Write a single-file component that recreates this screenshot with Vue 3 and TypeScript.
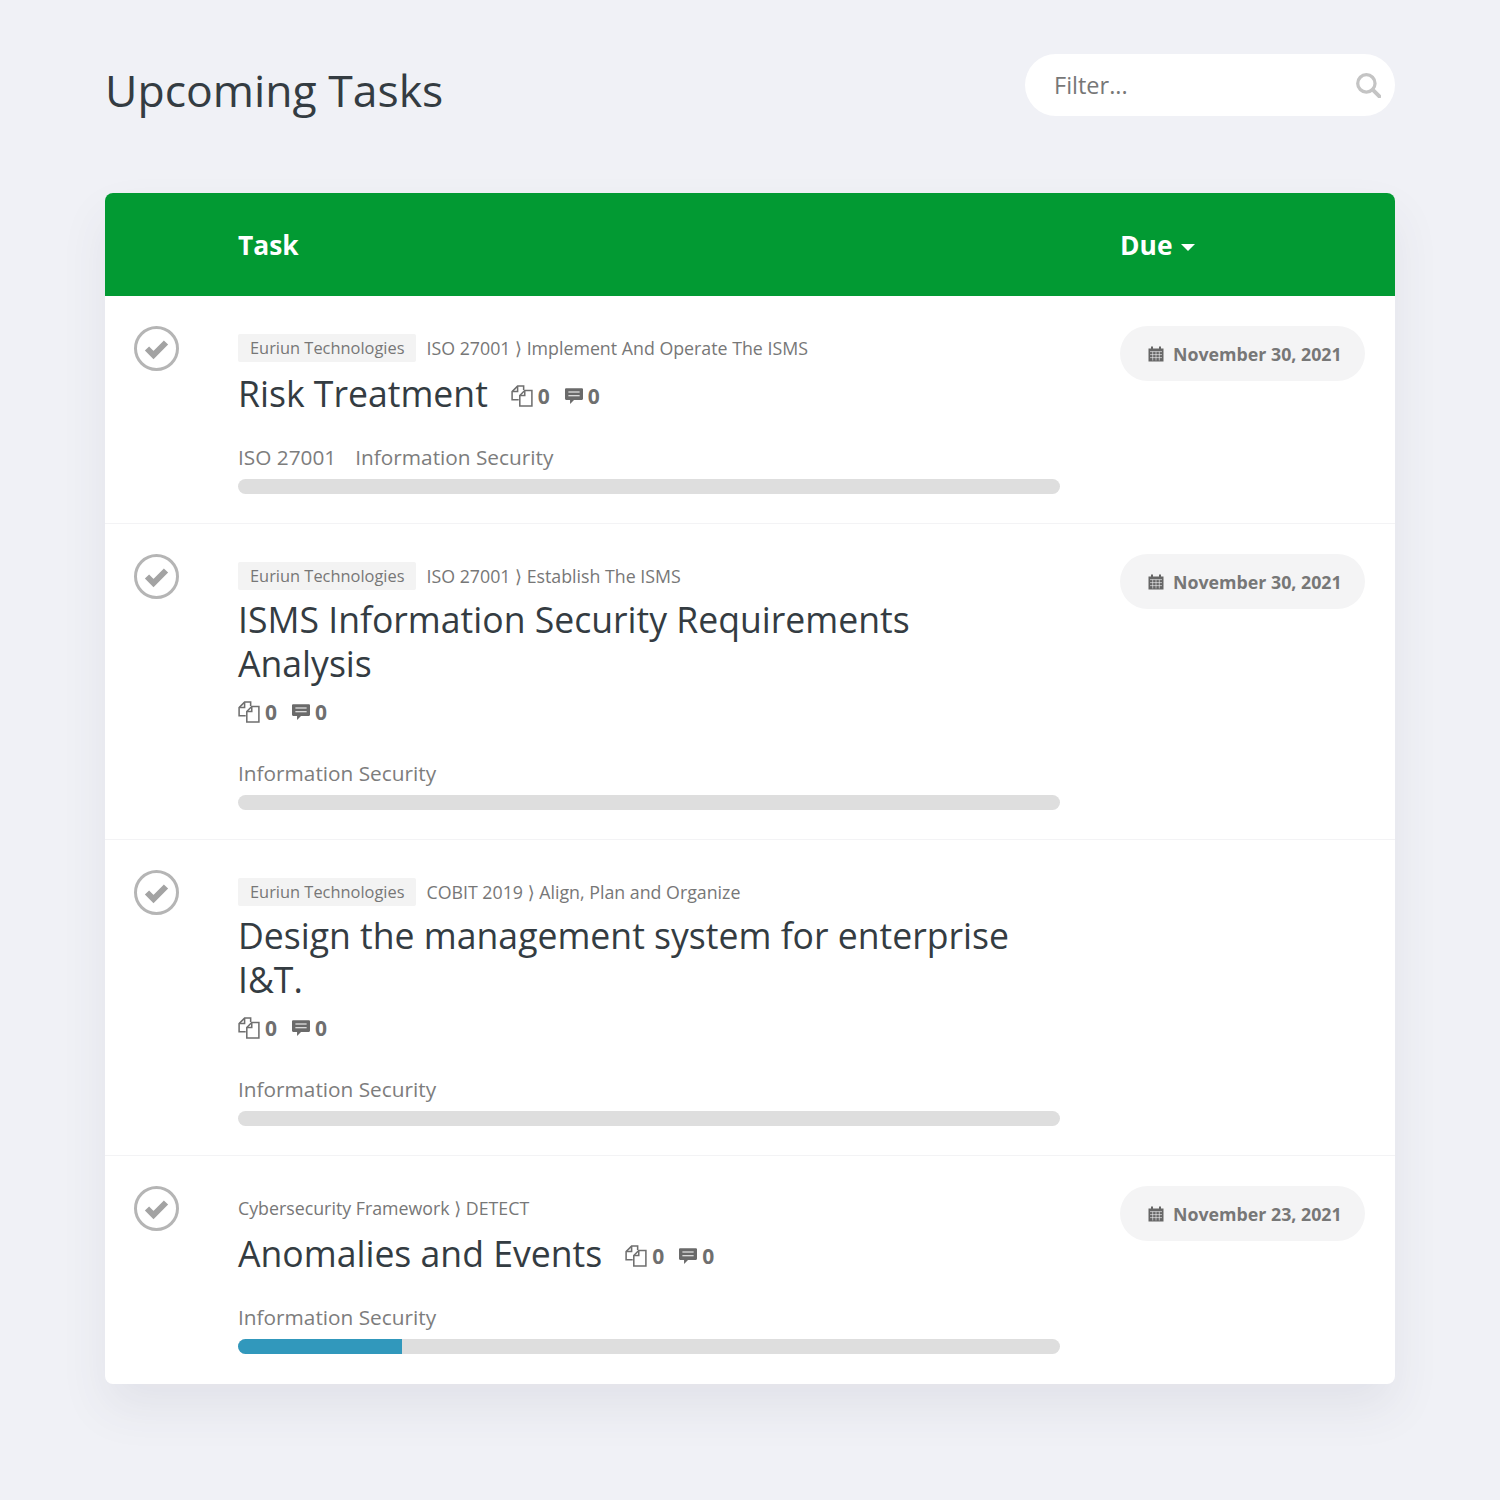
<template>
  <div class="page">
    <header class="top">
      <h1>Upcoming Tasks</h1>
      <div class="filter">
        <input type="text" placeholder="Filter..." />
        <svg class="search" viewBox="0 0 24 24" width="26" height="26" fill="none" stroke="#c4c4c4">
          <circle cx="10.5" cy="10.5" r="8" stroke-width="3" />
          <path d="M16.5 16.5 22.5 22.5" stroke-width="3.6" stroke-linecap="round" />
        </svg>
      </div>
    </header>

    <section class="card">
      <div class="head">
        <div class="head-task">Task</div>
        <div class="head-due">Due <span class="caret"></span></div>
      </div>

      <div v-for="task in tasks" :key="task.title" class="row">
        <div class="check">
          <svg viewBox="0 0 45 45" width="45" height="45" fill="none">
            <circle cx="22.5" cy="22.5" r="21" stroke="#b5b5b5" stroke-width="3" />
            <path d="M13 22.5 19.5 29 32 16.5" stroke="#a3a3a3" stroke-width="6" />
          </svg>
        </div>
        <div class="main">
          <div class="crumbs">
            <span v-if="task.company" class="company">{{ task.company }}</span>
            <span>{{ task.path }}</span>
          </div>
          <div class="title-line">
            <h2>{{ task.title }}</h2>
            <span class="counts">
              <span class="count">
                <svg viewBox="1 1.5 20 20" width="22" height="22" fill="none" stroke="#6f6f6f" stroke-width="1.4">
                  <path d="M8 15H2V7.5L7 2.5H12.5V6" />
                  <path d="M7 2.5V7.5H2" />
                  <path d="M9 20.5V11L13.5 6.5H20V20.5Z" />
                  <path d="M13.5 6.5V11H9" />
                </svg>
                0
              </span>
              <span class="count">
                <svg viewBox="1 1.5 16 16" width="18" height="18">
                  <path d="M2 2.5H16A1 1 0 0 1 17 3.5V12A1 1 0 0 1 16 13H9L5.5 16.5V13H2A1 1 0 0 1 1 12V3.5A1 1 0 0 1 2 2.5Z" fill="#6a6a6a" />
                  <path d="M4 6H14M4 9.2H14" stroke="#fff" stroke-width="0.9" />
                </svg>
                0
              </span>
            </span>
          </div>
          <div class="tags">
            <span v-for="tag in task.tags" :key="tag">{{ tag }}</span>
          </div>
          <div class="bar">
            <div class="fill" :style="{ width: task.progress + '%' }"></div>
          </div>
        </div>
        <div class="due">
          <span v-if="task.due" class="pill">
            <svg viewBox="0 0 16 16" width="16" height="16">
              <path d="M0.5 2.5H3V0.5H5V2.5H11V0.5H13V2.5H15.5V15.5H0.5Z" fill="#666" />
              <path d="M2 5.6H14M2 8.6H14M2 11.6H14M4.7 5.6V14.5M8 5.6V14.5M11.3 5.6V14.5" stroke="#f4f4f5" stroke-width="0.6" />
            </svg>
            {{ task.due }}
          </span>
        </div>
      </div>
    </section>
  </div>
</template>

<script setup lang="ts">
interface Task {
  company: string;
  path: string;
  title: string;
  tags: string[];
  progress: number;
  due: string;
}

const tasks: Task[] = [
  {
    company: "Euriun Technologies",
    path: "ISO 27001 ⟩ Implement And Operate The ISMS",
    title: "Risk Treatment",
    tags: ["ISO 27001", "Information Security"],
    progress: 0,
    due: "November 30, 2021",
  },
  {
    company: "Euriun Technologies",
    path: "ISO 27001 ⟩ Establish The ISMS",
    title: "ISMS Information Security Requirements Analysis",
    tags: ["Information Security"],
    progress: 0,
    due: "November 30, 2021",
  },
  {
    company: "Euriun Technologies",
    path: "COBIT 2019 ⟩ Align, Plan and Organize",
    title: "Design the management system for enterprise I&T.",
    tags: ["Information Security"],
    progress: 0,
    due: "",
  },
  {
    company: "",
    path: "Cybersecurity Framework ⟩ DETECT",
    title: "Anomalies and Events",
    tags: ["Information Security"],
    progress: 20,
    due: "November 23, 2021",
  },
];
</script>

<style>
html,
body {
  background: #f0f1f6;
}
</style>

<style scoped>
.page {
  box-sizing: border-box;
  width: 1500px;
  height: 1500px;
  padding: 54px 105px 0;
  background: #f0f1f6;
  font-family: "Open Sans", "DejaVu Sans", sans-serif;
  color: #777;
}

.top {
  display: flex;
  justify-content: space-between;
  align-items: flex-start;
  height: 139px;
}

h1 {
  margin: 0;
  font-size: 44.5px;
  font-weight: 400;
  line-height: 72px;
  color: #343c42;
}

.filter {
  display: flex;
  align-items: center;
  box-sizing: border-box;
  width: 370px;
  height: 62px;
  padding: 0 14px 0 29px;
  background: #fff;
  border-radius: 31px;
}

.filter input {
  flex: 1;
  min-width: 0;
  border: 0;
  outline: 0;
  padding: 0;
  background: transparent;
  font: inherit;
  font-size: 23.5px;
}

.filter input::placeholder {
  color: #777;
  opacity: 1;
}

.card {
  background: #fff;
  border-radius: 8px;
  overflow: hidden;
  box-shadow: 0 24px 48px rgba(60, 65, 90, 0.08);
}

.head {
  display: flex;
  height: 103px;
  align-items: center;
  background: #029a33;
  color: #fff;
  font-size: 26.4px;
  font-weight: 700;
}

.head-task {
  width: 1015px;
  padding-left: 133px;
  box-sizing: border-box;
}

.caret {
  display: inline-block;
  margin-left: 2px;
  vertical-align: 4px;
  border-left: 7px solid transparent;
  border-right: 7px solid transparent;
  border-top: 7px solid #fff;
}

.row {
  display: flex;
  padding: 30px 30px 29px 29px;
  border-bottom: 1px solid #f3f3f5;
}

.row:last-child {
  padding-bottom: 30px;
  border-bottom: 0;
}

.check {
  width: 104px;
  flex: none;
  height: 45px;
}

.check svg {
  display: block;
}

.main {
  width: 822px;
  flex: none;
}

.crumbs {
  display: flex;
  align-items: center;
  gap: 10px;
  height: 44px;
  font-size: 17.8px;
}

.company {
  display: inline-block;
  padding: 0 12px;
  line-height: 28px;
  font-size: 16.4px;
  background: #f3f3f3;
  border-radius: 2px;
}

.title-line {
  display: flex;
  flex-wrap: wrap;
  align-items: center;
  column-gap: 23px;
}

h2 {
  max-width: 800px;
  margin: -1px 0 1px;
  font-size: 35.6px;
  font-weight: 400;
  line-height: 44px;
  color: #343c42;
}

.counts {
  display: flex;
  align-items: center;
  gap: 15px;
  box-sizing: border-box;
  height: 48px;
  padding-top: 4px;
  font-size: 21px;
  font-weight: 700;
  color: #6f6f6f;
}

.count {
  display: flex;
  align-items: center;
  gap: 5px;
}

.tags {
  display: flex;
  gap: 19px;
  margin-top: 25px;
  font-size: 20.8px;
  line-height: 28px;
  color: #7d7d7d;
}

.bar {
  height: 15px;
  margin-top: 8px;
  background: #dedede;
  border-radius: 8px;
  overflow: hidden;
}

.fill {
  height: 100%;
  background: #3198bc;
}

.due {
  margin-left: 60px;
  flex: 1;
}

.pill {
  display: flex;
  align-items: center;
  gap: 9px;
  height: 55px;
  padding-left: 28px;
  background: #f4f4f5;
  border-radius: 28px;
  font-size: 17.8px;
  font-weight: 700;
  color: #777;
}
</style>
